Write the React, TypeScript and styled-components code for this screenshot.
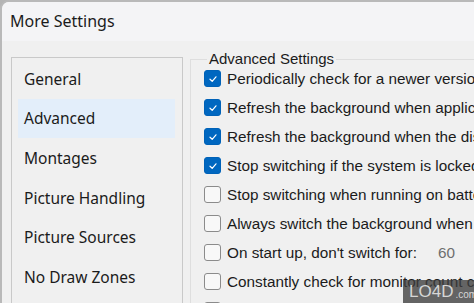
import React from 'react';
import styled, { createGlobalStyle } from 'styled-components';

const GlobalStyle = createGlobalStyle`
  html, body {
    margin: 0;
    padding: 0;
    background: #b4b4b4;
    overflow: hidden;
  }
`;

const Window = styled.div`
  width: 472px;
  height: 301px;
  border-top: 2px solid #b9b9b9;
  border-left: 2px solid #b9b9b9;
  border-top-left-radius: 9px;
  background: #f0f0f0;
  overflow: hidden;
  display: flex;
  flex-direction: column;
  font-family: 'Noto Sans', sans-serif;
  color: #1b1b1b;
`;

const TitleBar = styled.div`
  height: 38px;
  flex-shrink: 0;
  background: #f4f4f6;
  display: flex;
  align-items: center;
  padding-left: 8px;
  font-size: 16px;
  padding-bottom: 1px;
`;

const Body = styled.div`
  flex: 1;
  display: flex;
  gap: 7px;
  padding: 16px 0 0 9px;
  min-height: 0;
`;

const Sidebar = styled.div`
  width: 172px;
  box-sizing: border-box;
  flex-shrink: 0;
  border: 1px solid #c9c9c9;
  border-bottom: none;
  padding: 1px 7px 0 6px;
  display: flex;
  flex-direction: column;
`;

const NavItem = styled.div<{ $active?: boolean }>`
  height: 39.6px;
  flex-shrink: 0;
  display: flex;
  align-items: center;
  padding-left: 6px;
  font-size: 15.5px;
  white-space: nowrap;
  background: ${p => (p.$active ? '#e3eefa' : 'transparent')};
`;

const Group = styled.fieldset`
  flex: 1;
  margin: -3px 0 0 0;
  padding: 0 0 0 13px;
  border: 1px solid #dedede;
  border-right: none;
  border-bottom: none;
  display: flex;
  flex-direction: column;
  min-width: 0;
`;

const Legend = styled.legend`
  font-size: 15px;
  padding: 0 2px;
  margin-left: 3px;
  line-height: 10px;
  font-family: 'Liberation Sans', sans-serif;
`;

const Row = styled.div`
  height: 29px;
  flex-shrink: 0;
  display: flex;
  align-items: center;
  gap: 6px;
  white-space: nowrap;
  font-size: 15.3px;
  font-family: 'Liberation Sans', sans-serif;
`;

const Box = styled.span<{ $checked?: boolean }>`
  width: 17px;
  height: 17px;
  flex-shrink: 0;
  box-sizing: border-box;
  border-radius: 3px;
  border: 1px solid ${p => (p.$checked ? '#0062b8' : '#8b8b8b')};
  background: ${p => (p.$checked ? '#0067c0' : '#f8f8f8')};
  display: flex;
  align-items: center;
  justify-content: center;
`;

const NumberInput = styled.span`
  margin-left: 10px;
  width: 60px;
  color: #6e6e6e;
  padding-left: 5px;
`;

const Watermark = styled.div`
  position: absolute;
  right: 0;
  bottom: 0;
  width: 71px;
  height: 23px;
  background: rgba(60, 60, 60, 0.78);
  display: flex;
  align-items: center;
  gap: 2px;
  padding-left: 4px;
  box-sizing: border-box;
  color: #d6d6d6;
  font-family: 'Liberation Sans', sans-serif;
  font-size: 17px;
`;

const Small = styled.span`
  font-size: 10px;
  margin-top: 5px;
`;

const Check = () => (
  <svg width="10" height="10" viewBox="0 0 10 10">
    <path d="M2 5.2 L4.2 7.3 L8 2.8" fill="none" stroke="#fff" strokeWidth="1.2" strokeLinecap="round" strokeLinejoin="round" />
  </svg>
);

const nav = ['General', 'Advanced', 'Montages', 'Picture Handling', 'Picture Sources', 'No Draw Zones', 'Hotkeys'];

const options: { label: string; checked: boolean; input?: string }[] = [
  { label: 'Periodically check for a newer version', checked: true },
  { label: 'Refresh the background when applications change', checked: true },
  { label: 'Refresh the background when the display changes', checked: true },
  { label: 'Stop switching if the system is locked', checked: true },
  { label: 'Stop switching when running on battery', checked: false },
  { label: 'Always switch the background when', checked: false },
  { label: "On start up, don't switch for:", checked: false, input: '60' },
  { label: 'Constantly check for monitor count changes', checked: false },
  { label: 'Use alternate method', checked: false },
];

export default function App() {
  return (
    <>
      <GlobalStyle />
      <Window>
        <TitleBar>More Settings</TitleBar>
        <Body>
          <Sidebar>
            {nav.map(n => (
              <NavItem key={n} $active={n === 'Advanced'}>{n}</NavItem>
            ))}
          </Sidebar>
          <Group>
            <Legend>Advanced Settings</Legend>
            {options.map(o => (
              <Row key={o.label}>
                <Box $checked={o.checked}>{o.checked && <Check />}</Box>
                <span>{o.label}</span>
                {o.input && <NumberInput>{o.input}</NumberInput>}
              </Row>
            ))}
          </Group>
        </Body>
      </Window>
      <Watermark>
        <svg width="14" height="14" viewBox="0 0 14 14">
          <circle cx="7" cy="7" r="6" fill="#cfcfcf" />
          <circle cx="7" cy="7" r="3" fill="#555" />
        </svg>
        LO4D<Small>.com</Small>
      </Watermark>
    </>
  );
}
